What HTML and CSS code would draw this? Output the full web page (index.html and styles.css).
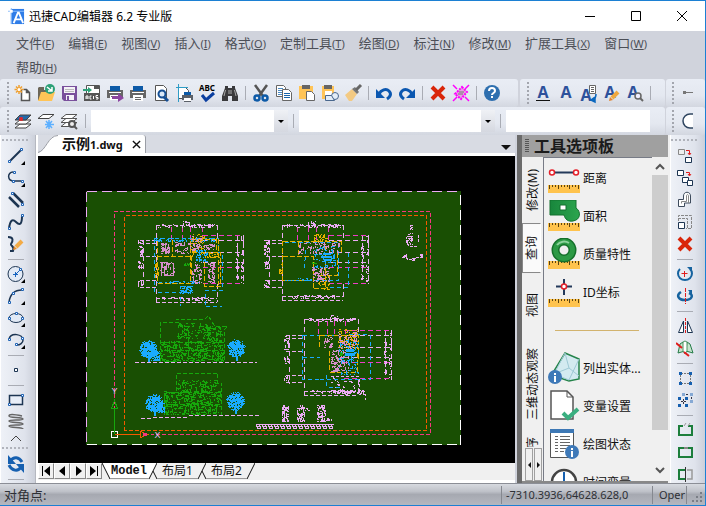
FILE: index.html
```html
<!DOCTYPE html>
<html lang="zh-CN">
<head>
<meta charset="utf-8">
<title>迅捷CAD编辑器 6.2 专业版</title>
<link rel="stylesheet" href="styles.css">
</head>
<body>
<div class="window">
  <header class="titlebar">
    <svg class="logo" viewBox="0 0 18 18"><path fill="#2f7de8" d="M3 1h14v16H3z"/><path fill="#8fc0fb" d="M0 3h17v1H0zM3 0h1v17H3z"/><path stroke="#fff" stroke-width="2" fill="none" d="M6 16 10.500 5h1L16 16M8 12h6"/><path fill="#fff" d="M2 2h3v3H2z"/></svg>
    <h1>迅捷CAD编辑器 6.2 专业版</h1>
    <div class="caption">
      <button aria-label="最小化"><svg viewBox="0 0 12 12"><path d="M1 6.500h10"/></svg></button>
      <button aria-label="最大化"><svg viewBox="0 0 12 12"><path d="M1.500 1.500h9v9h-9z"/></svg></button>
      <button aria-label="关闭"><svg viewBox="0 0 12 12"><path d="m1 1 10 10M11 1 1 11"/></svg></button>
    </div>
  </header>

  <nav class="menu">
    <button>文件<small>(<u>F</u>)</small></button>
    <button>编辑<small>(<u>E</u>)</small></button>
    <button>视图<small>(<u>V</u>)</small></button>
    <button>插入<small>(<u>I</u>)</small></button>
    <button>格式<small>(<u>O</u>)</small></button>
    <button>定制工具<small>(<u>T</u>)</small></button>
    <button>绘图<small>(<u>D</u>)</small></button>
    <button>标注<small>(<u>N</u>)</small></button>
    <button>修改<small>(<u>M</u>)</small></button>
    <button>扩展工具<small>(<u>X</u>)</small></button>
    <button>窗口<small>(<u>W</u>)</small></button>
    <button>帮助<small>(<u>H</u>)</small></button>
  </nav>

  <div class="bars">
    <div class="bar bar-main">
      <i class="grip"></i>
      <button aria-label="新建"><svg viewBox="0 0 18 18"><path d="M7.500 5.500v11h8v-8l-3-3h-3M12.500 5.500v3h3" fill="#fff" stroke="#555" stroke-width="1.500"/><path d="M5 1v9M.5 5.500h9M2 2.500l6 6M8 2.500l-6 6" stroke="#f0a030" stroke-width="1.500"/><circle cx="5" cy="5.500" r="1.500" fill="#fff"/></svg></button>
      <button aria-label="打开"><svg viewBox="0 0 18 18"><path d="M1 16V4l1-1h5v3h7v10z" fill="#6c6659"/><path d="M4 8h14l-3 9H1z" fill="#ffc457"/><circle cx="13" cy="5" r="5" fill="#2da178"/><path d="m10 3 5 4M15 3v4h-4" stroke="#fff" stroke-width="1.500" fill="none"/></svg></button>
      <button aria-label="保存"><svg viewBox="0 0 18 18"><path fill="#7a509c" d="M2 2h15v15H4l-2-2z"/><path fill="#f4f2f7" d="M4 3h11v6H4zM6 11h8v5H6z"/><path stroke="#bbb" d="M5 5.500h9M5 7.500h9"/><path fill="#7a509c" d="M7 12h2v4H7z"/></svg></button>
      <button aria-label="ACIS 导入"><svg viewBox="0 0 18 18"><path fill="#fff" stroke="#555" d="M3.500 1.500h13v14h-13z"/><path fill="#555" d="M1 9h16v8H1zM11 2h5v3h-5z"/><path d="M0 5h5V3l4 3-4 3V7H0z" fill="#2da178"/><path d="M3 15v-3h2v3M3 14h2M8.500 12H7v3h1.500M10.500 12v3M15 11.500h-2v2h2V15h-2" stroke="#fff" fill="none"/></svg></button>
      <button aria-label="直接打印"><svg viewBox="0 0 18 18"><path fill="#666" d="M1 6h16v8H1z"/><path fill="#0d5aa7" d="M4 2h10v5H4z"/><path fill="#fff" d="M3 8h12v1H3zM4 11h9v5H4z"/><path fill="#666" d="M5 12h5v1H5z"/><path d="M6 12h6V9l6 5-6 4v-3H6z" fill="#8b45a0"/></svg></button>
      <button aria-label="打印"><svg viewBox="0 0 18 18"><path fill="#666" d="M1 6h16v8H1z"/><path fill="#0d5aa7" d="M4 2h10v5H4z"/><path fill="#fff" d="M3 8h12v1H3zM4 11h10v6H4z"/><path fill="#666" d="M6 13h6v1H6zM6 15h6v1H6z"/></svg></button>
      <button aria-label="打印预览"><svg viewBox="0 0 18 18"><path d="M3.500 1.500h8l3 3v12h-11z" fill="#fff" stroke="#555"/><circle cx="10" cy="10" r="3.500" fill="#dbe9f8" stroke="#154f94" stroke-width="2"/><path d="m12 13 4 4" stroke="#154f94" stroke-width="3"/></svg></button>
      <button aria-label="页面设置"><svg viewBox="0 0 18 18"><path d="M3.500 3.500h7l3 3v8h-10z" fill="#fff" stroke="#555"/><path d="M3.500 0v18M1 3.500h12" stroke="#2e9cc6"/><path fill="#5b6068" d="M7 11h11v5H7z"/><path fill="#0d5aa7" d="M9 8h7v3H9z"/><path fill="#fff" d="M9 14h7v3H9z"/><path fill="#5b6068" d="M9 17h7v1H9z"/></svg></button>
      <button aria-label="拼写检查"><svg viewBox="0 0 18 18"><text x="9" y="7" class="abc">ABC</text><path d="m4 11 4 5 8-7" fill="none" stroke="#0b3fa0" stroke-width="3"/></svg></button>
      <button aria-label="查找"><svg viewBox="0 0 18 18"><path fill="#3a3a3c" d="M4 2h3v2h4V2h3v2l3 8v5h-6v-5H7v5H1v-5l3-8z"/><path stroke="#aaa" d="M4.500 6 3 12M13.500 6l1.500 6M8 6v4M10 6v4"/></svg></button>
      <hr>
      <button aria-label="剪切"><svg viewBox="0 0 18 18"><path d="m3 1 8 11M15 1 7 12" stroke="#555" stroke-width="2.500"/><circle cx="5" cy="14" r="2.500" fill="none" stroke="#0d5aa7" stroke-width="2.500"/><circle cx="13" cy="14" r="2.500" fill="none" stroke="#0d5aa7" stroke-width="2.500"/></svg></button>
      <button aria-label="复制"><svg viewBox="0 0 18 18"><path d="M1.500 1.500h7l2 2v9h-9z" fill="#fff" stroke="#666"/><path d="M3 4.500h5M3 6.500h4M3 8.500h4M3 10.500h4" stroke="#4a8ac4"/><path d="M7.500 5.500h6l3 3v8h-9z" fill="#fff" stroke="#666"/><path d="M9 9.500h6M9 11.500h6M9 13.500h6" stroke="#1764ab"/></svg></button>
      <button aria-label="粘贴"><svg viewBox="0 0 18 18"><path fill="#ffc457" d="M1 2h14v13H1z"/><path fill="#666" d="M4 1h8v4H4z"/><path d="M8.500 7.500h5l3 3v6h-8z" fill="#fff" stroke="#666"/></svg></button>
      <button aria-label="选择性粘贴"><svg viewBox="0 0 18 18"><path fill="#ffc457" d="M1 2h12v13H1z"/><path fill="#fff" d="M4 7h7v5H4z"/><path fill="#666" d="M3 1h8v4H3z"/><circle cx="14" cy="12" r="3.500" fill="#e3edf8" stroke="#49678d"/><path fill="#e3edf8" stroke="#49678d" d="M4.500 11.500h6l3 5h-9z"/></svg></button>
      <button aria-label="格式刷"><svg viewBox="0 0 18 18"><path d="m1 11 7-6 5 5-5 7H5z" fill="#f3ca83"/><path d="m8 5 3-2 4 5-2 2z" fill="#777"/><path d="m12 6 5-5" stroke="#666" stroke-width="3"/></svg></button>
      <hr>
      <button aria-label="撤销"><svg viewBox="0 0 18 18"><path fill="none" stroke="#0b57b0" stroke-width="3" d="M4 10c2-4 7-6 10-3 3 3 1 6-2 8"/><path fill="#0b57b0" d="M1 5v9h9z"/></svg></button>
      <button aria-label="重做"><svg viewBox="0 0 18 18"><path fill="none" stroke="#0b57b0" stroke-width="3" d="M14 10C12 6 7 4 4 7c-3 3-1 6 2 8"/><path fill="#0b57b0" d="M17 5v9H8z"/></svg></button>
      <hr>
      <button aria-label="删除"><svg viewBox="0 0 18 18"><path stroke="#d9260a" stroke-width="4" d="m3 3 12 12M15 3 3 15"/></svg></button>
      <button aria-label="清理"><svg viewBox="0 0 18 18"><path d="m1 1 4 4M17 1l-4 4M1 17l4-4M17 17l-4-4" stroke="#f0f" stroke-width="1.500"/><path d="m10 3 5 5-6 7-6-5z" fill="#e3a4df" stroke="#f0f" stroke-width="2" stroke-dasharray="2 1"/><path d="M7 8h5M6 10h5" stroke="#777"/></svg></button>
      <hr>
      <button aria-label="帮助"><svg viewBox="0 0 18 18"><circle cx="9" cy="9" r="8" fill="#2e6faf"/><path d="M6 7c0-4 6-4 6 0 0 2-3 2-3 4" stroke="#fff" stroke-width="2" fill="none"/><path fill="#fff" d="M8 12h2v2H8z"/></svg></button>
    </div>
    <div class="bar bar-text">
      <i class="grip"></i>
      <button aria-label="多行文字"><svg viewBox="0 0 18 18"><text x="9" y="14" class="letter">A</text><path stroke="#111" d="M2 16.500h14"/></svg></button>
      <button aria-label="单行文字"><svg viewBox="0 0 18 18"><text x="9" y="14" class="letter">A</text></svg></button>
      <button aria-label="文字样式"><svg viewBox="0 0 18 18"><text x="6" y="17" class="letter">A</text><path d="M9.500 1.500h6v8h-6z" fill="#fff" stroke="#666"/><path stroke="#666" d="M11 3.500h3M11 5.500h3M11 7.500h3"/><path d="M16 10c0 4-1 5-3 6M11 16l4-3v5z" stroke="#0b68bf" fill="#0b68bf" stroke-width="1.500"/></svg></button>
      <button aria-label="编辑文字"><svg viewBox="0 0 18 18"><text x="7" y="14" class="letter">A</text><path stroke="#f0a93f" stroke-width="4" d="m9 14 6-6"/><path fill="#e2832c" d="m6 17 1-4 3 3z"/></svg></button>
      <button aria-label="查找文字"><svg viewBox="0 0 18 18"><text x="7" y="14" class="letter">A</text><circle cx="12" cy="12" r="3" fill="#eef" stroke="#666" stroke-width="1.500"/><path d="m14 14 3 3" stroke="#666" stroke-width="2"/></svg></button>
      <hr>
    </div>
    <div class="bar bar-tail">
      <i class="grip"></i>
      <button aria-label="线型"><svg viewBox="0 0 18 18"><path fill="#777" d="M4 7h3v3H4z"/><path stroke="#777" d="M7 8.500h7"/></svg></button>
    </div>
  </div>

  <div class="bars">
    <div class="bar bar-layers">
      <i class="grip"></i>
      <button aria-label="图层特性"><svg viewBox="0 0 18 18"><path d="M6 12h11l-5 4H1z" fill="#fff" stroke="#444"/><path d="M6 8h11l-5 4H1z" fill="#fff" stroke="#444"/><path d="M6 3h11l-5 5H1z" fill="#2469a8" stroke="#444"/><path fill="#2469a8" stroke="#e22" stroke-width="1.500" d="M6 6h2v2H6z"/></svg></button>
      <button aria-label="冻结图层"><svg viewBox="0 0 18 18"><path d="M6 2.500h11l-5 4H1z" fill="#fff" stroke="#444"/><path d="M12 8v9M8 12.500h9M9 9l6 7M15 9l-6 7" stroke="#5db0ff" stroke-width="1.500"/></svg></button>
      <button aria-label="查看图层"><svg viewBox="0 0 18 18"><path d="M6 10.500h11l-5 4H1z" fill="#fff" stroke="#555"/><path d="M6 6.500h11l-5 4H1z" fill="#fff" stroke="#555"/><path d="M6 2.500h11l-5 4H1z" fill="#fff" stroke="#555"/><circle cx="12" cy="12" r="3" fill="#eee" stroke="#555" stroke-width="2"/><path d="m14 14 3 3" stroke="#555" stroke-width="2"/></svg></button>
      <hr class="wide">
      <label class="combo"><select aria-label="图层"><option></option></select><b></b></label>
      <hr class="wide">
      <label class="combo"><select aria-label="颜色"><option></option></select><b></b></label>
      <hr class="wide">
      <label class="combo combo-plain"><select aria-label="线型"><option></option></select></label>
    </div>
    <div class="bar bar-tail">
      <i class="grip"></i>
      <button aria-label="圆"><svg viewBox="0 0 18 18"><path d="M14 2H11a7 7 0 0 0 0 14h3z" fill="#fff"/><path d="M14 2H11a7 7 0 0 0 0 14h3" fill="none" stroke="#2f4560" stroke-width="1.500"/></svg></button>
    </div>
  </div>

  <main class="work">
    <aside class="rail">
      <i class="grip-h"></i>
      <button aria-label="直线"><svg viewBox="0 0 18 18"><path d="M3 14 14 3" stroke="#1d3552" stroke-width="2"/><path class="node" d="M1.500 13.500h2v2h-2zM13.500 1.500h2v2h-2z"/><path d="M18 14v4h-4z"/></svg></button>
      <button aria-label="多段线"><svg viewBox="0 0 18 18"><path d="M6 3C0 3 0 12 7 12h7" stroke="#1d3552" fill="none" stroke-width="1.500"/><path class="node" d="M6.500 2.500h2v2h-2zM5.500 11.500h2v2h-2zM14.500 11.500h2v2h-2z"/><path d="M18 14v4h-4z"/></svg></button>
      <button aria-label="双线"><svg viewBox="0 0 18 18"><path d="m2 6 10 10M6 2l10 10" stroke="#1d3552" stroke-width="2.500"/><path class="node" d="M4.500 1.500h2v2h-2zM14.500 12.500h2v2h-2z"/></svg></button>
      <button aria-label="样条曲线"><svg viewBox="0 0 18 18"><path d="M2 16C3 6 6 6 9 9c4 4 6 2 6-6" stroke="#1d3552" fill="none" stroke-width="2"/><path class="node" d="M1.500 14.500h2v2h-2zM14.500 1.500h2v2h-2z"/></svg></button>
      <button aria-label="徒手画"><svg viewBox="0 0 18 18"><path d="M1 2c6 0 5 4 3 7-1 2 4 2 2 7H3" stroke="#1d3552" fill="none" stroke-width="2"/><path stroke="#f3ab45" stroke-width="4" d="m9 12 6-6"/><path fill="#e58b2a" d="m6 15 1-4 3 3z"/></svg></button>
      <hr>
      <button aria-label="圆"><svg viewBox="0 0 18 18"><circle cx="8.500" cy="9" r="7.500" fill="#e2eaf6" stroke="#1d3552"/><path stroke="#1764c0" d="M6 9.500h5M8.500 7v5M9 9l4-4"/><path class="node" d="M12.500 3.500h2v2h-2z"/><path d="M18 14v4h-4z"/></svg></button>
      <button aria-label="圆弧"><svg viewBox="0 0 18 18"><path d="M2 15C3 8 7 3 15 3" stroke="#1d3552" fill="none" stroke-width="1.500"/><path class="node" d="M1.500 14.500h2v2h-2zM5.500 5.500h2v2h-2zM14.500 1.500h2v2h-2z"/><path d="M18 14v4h-4z"/></svg></button>
      <button aria-label="椭圆"><svg viewBox="0 0 18 18"><ellipse cx="9" cy="9" rx="7" ry="4.500" fill="#e2eaf6" stroke="#1d3552"/><path class="node" d="M1.500 8.500h2v2h-2zM8.500 3.500h2v2h-2zM14.500 8.500h2v2h-2z"/><path d="M18 14v4h-4z"/></svg></button>
      <button aria-label="椭圆弧"><svg viewBox="0 0 18 18"><path d="M2 8c2-7 14-5 14 1 0 3-3 5-6 5" fill="none" stroke="#1d3552" stroke-width="1.500"/><path class="node" d="M1.500 7.500h2v2h-2zM8.500 12.500h2v2h-2zM14.500 6.500h2v2h-2z"/><path d="M18 14v4h-4z"/></svg></button>
      <hr>
      <button aria-label="点"><svg viewBox="0 0 18 18"><path d="M7.500 7.500h3v3h-3z" fill="#fff" stroke="#1d3552"/></svg></button>
      <hr>
      <button aria-label="矩形"><svg viewBox="0 0 18 18"><path d="M2.500 4.500h13v9h-13z" fill="#e8eef8" stroke="#1d3552" stroke-width="1.500"/><path class="node" d="M1.500 12.500h2v2h-2zM14.500 3.500h2v2h-2z"/></svg></button>
      <button aria-label="弹簧"><svg viewBox="0 0 18 18"><path d="M15 3C6 1 2 1 2 3s14 1 14 3-14 0-14 2 14 1 14 3-14 0-14 2 14 1 14 3" fill="none" stroke="#666" stroke-width="1.500"/></svg></button>
      <button class="more" aria-label="更多"><svg viewBox="0 0 18 18"><path d="m4 12 5-5 5 5" fill="none" stroke="#444"/></svg></button>
      <i class="grip-h"></i>
      <button aria-label="刷新"><svg viewBox="0 0 18 18"><path fill="none" stroke="#1660b0" stroke-width="3" d="M15 7C12 2 7 1 3 6M2 10c3 6 9 7 12 2"/><path fill="#1660b0" d="M1 0v9h8zM17 18V9H9z"/></svg></button>
      <hr>
    </aside>

    <section class="doc">
      <div class="doctabs">
        <div class="doctab"><svg class="slope" viewBox="0 0 20 18"><path d="M0 18C8 16 10 0 20 0v18z" fill="#fff"/><path d="M0 17.500C8 16 10 .5 20 .5" fill="none" stroke="#9a9da5"/></svg><span>示例<em>1.dwg</em></span><button aria-label="关闭文档"><svg viewBox="0 0 10 10"><path d="m1 1 8 8M9 1 1 9" stroke="#111" stroke-width="1.500"/></svg></button></div>
        <button class="doclist" aria-label="文档列表"></button>
      </div>
      <div class="canvas"><svg id="drawing" viewBox="38 156 477 307" preserveAspectRatio="xMinYMin meet"></svg></div>
      <div class="layouts">
        <button class="step" aria-label="第一个"><svg viewBox="0 0 12 12"><path d="M2 1h1v10H2zM10 1v10L4 6z"/></svg></button>
        <button class="step" aria-label="上一个"><svg viewBox="0 0 12 12"><path d="M9 1v10L3 6z"/></svg></button>
        <button class="step" aria-label="下一个"><svg viewBox="0 0 12 12"><path d="M4 1v10l6-5z"/></svg></button>
        <button class="step" aria-label="最后一个"><svg viewBox="0 0 12 12"><path d="M2 1v10l6-5zM9 1h1v10H9z"/></svg></button>
        <svg class="cut first" viewBox="0 0 8 16"><path class="paper" d="M0 0h8v16z"/><path d="m0 0 8 16"/></svg>
        <button class="layout current">Model</button>
        <svg class="cut" viewBox="0 0 8 16"><path class="paper" d="M0 0h8L0 16z"/><path d="M8 0 0 16M4 8l4 8"/></svg>
        <button class="layout">布局1</button>
        <svg class="cut" viewBox="0 0 8 16"><path d="M8 0 0 16M4 8l4 8"/></svg>
        <button class="layout">布局2</button>
        <svg class="cut" viewBox="0 0 8 16"><path d="M8 0 0 16"/></svg>
      </div>
    </section>

    <section class="palette">
      <h2><i></i>工具选项板</h2>
      <div class="pbody">
        <div class="ptabs">
          <button>修改(M)</button>
          <button class="on">查询</button>
          <button class="mid">视图</button>
          <button class="far">三维动态观察</button>
          <button class="last">程序</button>
          <div class="pscroll"><button aria-label="向前"></button><button class="next" aria-label="向后"></button></div>
        </div>
        <div class="plist">
          <button class="tool"><svg viewBox="0 0 32 32"><use href="#ruler"/><path d="M4 10.500h24" stroke="#23395a" stroke-width="2"/><circle cx="4" cy="10.500" r="2.500" class="red"/><circle cx="28" cy="10.500" r="2.500" class="red"/></svg>距离</button>
          <button class="tool"><svg viewBox="0 0 32 32"><use href="#ruler"/><path d="M2 0h26v8c5 3 5 12-3 13-5 1-8-2-9-6H2z" fill="url(#leaf)" stroke="#13702f"/><path fill="#fff" stroke="#13702f" d="M12 5h6v5h-6z"/></svg>面积</button>
          <button class="tool"><svg viewBox="0 0 32 32"><use href="#ruler"/><circle cx="16" cy="12" r="8.500" fill="#efefef" stroke="#15702b" stroke-width="8"/><circle cx="16" cy="12" r="8.500" fill="none" stroke="#2c9a45" stroke-width="5"/><path d="M9 7a9 9 0 0 1 12-2" stroke="#8ed39d" stroke-width="2" fill="none"/></svg>质量特性</button>
          <button class="tool"><svg viewBox="0 0 32 32"><use href="#ruler"/><path d="M16 3v16M8 10.500h16" stroke="#23395a" stroke-width="2"/><circle cx="16" cy="10.500" r="2.500" class="red"/></svg>ID坐标</button>
          <hr>
          <button class="tool"><svg viewBox="0 0 32 32"><path d="m17 1 14 6v20l-10 2-15-5V19z" fill="#d3eaf0" stroke="#25834a" stroke-width="1.500"/><path d="M17 1 6 22l15 6 10-21M6 22l15-6 10 8M21 16 17 1" fill="none" stroke="#9ec9d5"/><use href="#info" x="0" y="18"/></svg>列出实体...</button>
          <button class="tool"><svg viewBox="0 0 32 32"><path d="M3 1h16l6 6v22H3z" fill="#fff" stroke="#555" stroke-width="1.500"/><path d="M19 1v6h6" fill="none" stroke="#555"/><path d="m15 23 5 5 10-9" fill="none" stroke="#3aaf80" stroke-width="4"/></svg>变量设置</button>
          <button class="tool"><svg viewBox="0 0 32 32"><path d="M2.500 1.500h23v28h-23z" fill="#fff" stroke="#555"/><path fill="#3d78b5" d="M2 1h24v4H2z"/><path d="M7 8.500h3M12 8.500h10M7 11.500h3M12 11.500h10M7 14.500h3M12 14.500h10M7 17.500h3M12 17.500h10M7 20.500h3M12 20.500h6M7 23.500h3M12 23.500h4" stroke="#666"/><use href="#info" x="17" y="17"/></svg>绘图状态</button>
          <button class="tool"><svg viewBox="0 0 32 32"><circle cx="16" cy="16" r="12" fill="#fff" stroke="#444" stroke-width="2.500"/><path d="M16 6v10" stroke="#1660b0" stroke-width="2"/></svg>时间变量</button>
        </div>
        <div class="scroll">
          <button aria-label="向上滚动"><svg viewBox="0 0 10 10"><path d="m1 7 4-4 4 4"/></svg></button>
          <i class="thumb"></i>
          <button aria-label="向下滚动"><svg viewBox="0 0 10 10"><path d="m1 3 4 4 4-4"/></svg></button>
        </div>
      </div>
    </section>

    <aside class="rail rail-right">
      <i class="grip-h"></i>
      <button aria-label="复制对象"><svg viewBox="0 0 18 18"><path d="M2.500 2.500h6v5h-6z" fill="#eee" stroke="#888"/><path d="M10 3.500h3.500V7M12 6l1.500 2L15 6" class="redline"/><path d="M9.500 10.500h6v5h-6z" class="box"/></svg></button>
      <button aria-label="多次复制"><svg viewBox="0 0 18 18"><path d="M1.500 1.500h6v5h-6z" class="box"/><path d="M10 3.500h3.500V6M12 5l1.500 2L15 5" class="redline"/><path d="M6.500 8.500h6v5h-6z" class="box"/><path d="M11.500 11.500h5v5h-5z" class="box"/></svg></button>
      <button aria-label="偏移"><svg viewBox="0 0 18 18"><path d="M2.500 15.500v-7h5V5c0-5 7-5 7 0v7h-6v3.500z" fill="#fff" stroke="#3e4b5c"/><path d="M5.500 12.500v-2h5V5c0-2 2-2 2 0v7" fill="none" stroke="#888"/></svg></button>
      <button aria-label="缩放"><svg viewBox="0 0 18 18"><path d="M2.500 8V2.500h13v13H10M2 5.500h9.500V16" fill="none" stroke="#888" stroke-dasharray="3 1"/><path d="M2.500 9.500h6v6h-6z" class="box"/></svg></button>
      <button aria-label="删除对象"><svg viewBox="0 0 18 18"><path stroke="#d9260a" stroke-width="4" d="m3 3 12 12M15 3 3 15"/></svg></button>
      <hr>
      <button aria-label="旋转"><svg viewBox="0 0 18 18"><path d="M4 4a7 6.500 0 1 0 10 0" fill="none" stroke="#16639f" stroke-width="2"/><path fill="#16639f" d="M11 2h5v5z"/><path class="redline" d="M8.500 6v6M5.500 8.500h6"/></svg></button>
      <button aria-label="三维旋转"><svg viewBox="0 0 18 18"><path d="M5 5C0 8 2 13 9 13s9-5 4-7" fill="none" stroke="#16639f" stroke-width="2.500"/><path fill="#16639f" d="M12 3h4v5z"/><path class="redline" d="M9.500 1v16" stroke-dasharray="4 1"/></svg></button>
      <hr>
      <button aria-label="镜像"><svg viewBox="0 0 18 18"><path d="M7.500 4v11.500h-5zM11.500 4v11.500h5z" fill="#fff" stroke="#1d3552"/><path class="redline" d="M9.500 1v16" stroke-dasharray="3 1"/></svg></button>
      <button aria-label="三维镜像"><svg viewBox="0 0 18 18"><path d="m2 14 2-9 3-2 2 9zM10 12l1-9 3 2 3 9z" fill="#c8e4ce" stroke="#257c48"/><path d="m7 3 2-1 2 1v9l-2 3-2-3z" fill="#fff" stroke="#4a9461"/><path class="redline" d="m0 4 6 5M8 13l5 4" stroke-width="2"/></svg></button>
      <hr>
      <button aria-label="编组"><svg viewBox="0 0 18 18"><path d="M5 4.500h9M5 14.500h9M4.500 6v7M14.500 6v7" stroke="#777" stroke-dasharray="2 1"/><path fill="#1660b0" d="M3 3h3v3H3zM13 3h3v3h-3zM3 13h3v3H3zM13 13h3v3h-3z"/></svg></button>
      <button aria-label="阵列"><svg viewBox="0 0 18 18"><path fill="#86a9d4" d="M6 2h3v3H6zM14 2h3v3h-3zM14 9h3v3h-3z"/><path fill="#1660b0" d="M2 6h3v3H2zM9 6h3v3H9zM2 13h3v3H2zM9 13h3v3H9z"/><path d="M7.500 8v5M5 10.500h6M10 3.500h3M15.500 6v2" stroke="#334" stroke-dasharray="2 1"/></svg></button>
      <hr>
      <button aria-label="打断"><svg viewBox="0 0 18 18"><path d="M7 5H3v9h13V5h-4" class="green"/><path d="m8 5 2-3M12 5l2-3" stroke="#999"/></svg></button>
      <button aria-label="合并"><svg viewBox="0 0 18 18"><path d="M3 5h13v9H3z" class="green"/><path d="M8 4h4v2H8z" fill="#888"/></svg></button>
      <button aria-label="修剪"><svg viewBox="0 0 18 18"><path d="M9 5H3v9h6" class="green"/><path d="M11 5h5v9h-5" fill="none" stroke="#999" stroke-width="1.500"/><path d="M9.500 2v15" stroke="#333"/></svg></button>
    </aside>
  </main>

  <footer class="status">
    <span class="prompt">对角点:</span>
    <output class="coords">-7310.3936,64628.628,0</output>
    <span class="mode">Oper</span>
    <svg class="corner" viewBox="0 0 12 12"><path d="M9 1h2v2H9zM5 5h2v2H5zM9 5h2v2H9zM1 9h2v2H1zM5 9h2v2H5zM9 9h2v2H9z" fill="#7a7e86"/></svg>
  </footer>
</div>

<svg class="defs" aria-hidden="true">
  <defs>
    <linearGradient id="leaf"><stop offset="0" stop-color="#18863c"/><stop offset="1" stop-color="#2ca54e"/></linearGradient>
    <g id="ruler"><path fill="#ffc34d" d="M0 23h32v8H0z"/><path stroke="#5c4410" d="M1.500 23v4M4.500 23v2M7.500 23v2M10.500 23v4M13.500 23v2M16.500 23v2M19.500 23v2M21.500 23v4M24.500 23v2M27.500 23v2M30.500 23v4"/></g>
    <g id="info"><circle cx="7" cy="7" r="7" fill="#3e79b8"/><path d="M6 3h2v2H6zM6 6h2v6H6z" fill="#fff"/></g>
  </defs>
</svg>
<script src="drawing.js"></script>
</body>
</html>
```
FILE: styles.css
```css
* { box-sizing: border-box; }
body {
  margin: 0;
  font-family: "Noto Sans", "Noto Sans CJK SC", sans-serif;
  font-size: 12px;
  color: #111;
}
button, select {
  margin: 0;
  padding: 0;
  border: 0;
  border-radius: 0;
  background: none;
  font: inherit;
  color: inherit;
}
svg { display: block; flex: none; }
hr { margin: 0; border: 0; flex: none; }
.defs { position: absolute; width: 0; height: 0; }

.window {
  display: flex;
  flex-direction: column;
  height: 100vh;
  overflow: hidden;
  border: 1px solid #1c80d3;
  border-left: 0;
  background: #d0d3dc;
}

.titlebar { display: flex; align-items: center; flex: none; height: 30px; padding-left: 8px; background: #fff; }
.logo { width: 17px; height: 17px; }
.titlebar h1 { flex: 1; margin: 0 0 0 4px; font-size: 12px; font-weight: 400; color: #000; }
.caption { display: flex; }
.caption button { display: flex; align-items: center; justify-content: center; width: 46px; height: 29px; }
.caption svg { width: 12px; height: 12px; fill: none; stroke: #000; }

.menu { display: flex; flex-wrap: wrap; flex: none; column-gap: 14px; padding: 0 16px; color: #4c4f57; }
.menu button { height: 24px; font-size: 13px; line-height: 20px; white-space: nowrap; }
.menu small { font-size: 11px; }

.bars { display: flex; flex: none; height: 28px; }
.bar {
  display: flex;
  align-items: center;
  flex: none;
  padding-left: 7px;
  border-radius: 3px;
  background: linear-gradient(#e9edf5, #e4e8f0 60%, #d3d7e0);
}
.bar button { display: flex; align-items: center; justify-content: center; flex: none; width: 23px; height: 26px; }
.bar svg { width: 18px; height: 18px; overflow: visible; }
.bar hr { width: 8px; height: 14px; background: linear-gradient(#a9acb4, #a9acb4) center / 1px 100% no-repeat; }
.bar hr.wide { width: 11px; }
.bar-main { flex: 1; margin-right: 2px; }
.bar-text { width: 145px; margin-right: 1px; }
.bar-layers { flex: 1; margin-right: 1px; padding-right: 15px; }
.bar-tail { width: 39px; padding-left: 6px; }
.grip {
  flex: none;
  width: 2px;
  height: 22px;
  margin-right: 2px;
  background: repeating-linear-gradient(#a3a6ae 0 2px, transparent 2px 4px);
}
.abc { font: bold 8px "Noto Sans", sans-serif; text-anchor: middle; }
.letter { font: bold 16px "Open Sans", sans-serif; text-anchor: middle; fill: #2d519b; }
.combo { display: flex; flex: 197; height: 22px; background: #fff; }
.combo-plain { flex: 144; }
.combo select { flex: 1; min-width: 0; appearance: none; }
.combo b { display: flex; align-items: center; justify-content: center; width: 14px; background: linear-gradient(#eff1f5, #d5d8e0); }
.combo b::before { content: ""; border: 3px solid transparent; border-top-color: #000; border-bottom: 0; }

.work { display: flex; flex: 1; min-height: 0; }

.rail {
  display: flex;
  flex-direction: column;
  flex: none;
  width: 35px;
  padding: 4px 6px 0 1px;
  overflow: hidden;
  border-left: 1px solid #fff;
  background: linear-gradient(90deg, #eef1f7, #dfe3ec 70%, #ccd0da);
}
.rail button { display: flex; align-items: center; justify-content: center; flex: none; height: 22px; }
.rail svg { width: 18px; height: 18px; }
.rail .more { height: 10px; }
.rail hr { height: 8px; background: linear-gradient(#a9acb4, #a9acb4) center / 16px 1px no-repeat; }
.grip-h {
  flex: none;
  height: 2px;
  margin: 0 0 4px;
  background: repeating-linear-gradient(90deg, #b0b3bb 0 2px, transparent 2px 4px);
}
.more + .grip-h { margin-top: 4px; }
.rail-right { padding-left: 0; }
.node { fill: #fff; stroke: #1f63b5; }
.box { fill: #fff; stroke: #1d3552; }
.redline { fill: none; stroke: #e01c1c; }
.green { fill: none; stroke: #1c7e3c; stroke-width: 2; }

.doc { display: flex; flex-direction: column; flex: 1; min-width: 0; padding-left: 2px; background: #fff; border-left: 1px solid #b5b8c0; }
.doctabs {
  display: flex;
  align-items: flex-end;
  justify-content: space-between;
  flex: none;
  height: 21px;
  padding-right: 4px;
  border-bottom: 3px solid #fff;
  background: #d8dbe3;
}
.doctab { display: flex; align-items: center; height: 18px; padding-right: 4px; border-right: 1px solid #9a9da5; border-radius: 0 3px 0 0; background: linear-gradient(#fff, #fff) right / 88px 100% no-repeat; font-size: 14px; font-weight: 700; }
.doctab em { font-size: 11px; font-style: normal; }
.slope { width: 20px; height: 18px; }
.doctab span { padding: 0 9px 0 4px; line-height: 18px; white-space: nowrap; }
.doctab button svg { width: 9px; height: 9px; }
.doclist { width: 10px; height: 12px; }
.doclist::before { content: ""; display: block; border: 5px solid transparent; border-top-color: #111; border-bottom: 0; }
.canvas { display: flex; flex: 1; min-height: 0; background: #000; }
.canvas svg { flex: 1; min-width: 0; height: 100%; shape-rendering: crispEdges; }
.axis { font: 9px "Liberation Sans", sans-serif; fill: #ecbafa; text-anchor: middle; }

.layouts { display: flex; align-items: flex-start; flex: none; height: 20px; border-bottom: 3px solid #fff; background: #f0f0f0; font-size: 12px; }
.step { display: flex; align-items: center; justify-content: center; width: 16px; height: 16px; border: 1px solid #fff; border-right-color: #888; border-bottom-color: #888; }
.step svg { width: 12px; height: 12px; }
.cut { width: 8px; height: 16px; fill: none; stroke: #111; }
.cut .paper { fill: #fff; stroke: none; }
.layout { height: 16px; padding: 0 5px; line-height: 16px; border-bottom: 1px solid #999; }
.layout.current { padding: 0 2px 0 1px; background: #fff; font: bold 12px "Liberation Mono", monospace; }

.palette { display: flex; flex-direction: column; flex: none; width: 153px; border-left: 5px solid #6b6b6b; margin-left: 2px; background: #f0f0f0; }
.palette h2 { display: flex; align-items: center; flex: none; height: 22px; margin: 0 2px 0 0; padding-left: 3px; background: #a0a0a0; font-size: 16px; line-height: 20px; font-weight: 700; color: #1b1b1b; }
.palette h2 i { width: 4px; height: 14px; margin-right: 5px; background: repeating-linear-gradient(#555 0 1px, transparent 1px 2px); }
.pbody { display: flex; flex: 1; min-height: 0; margin-right: 2px; border-bottom: 2px solid #888; }
.ptabs { position: relative; display: flex; flex-direction: column; width: 21px; overflow: hidden; }
.ptabs > button { flex: none; width: 21px; padding: 12px 0; line-height: 18px; writing-mode: vertical-rl; text-orientation: sideways; transform: rotate(180deg); white-space: nowrap; }
.ptabs > .mid { padding: 14px 0 20px; }
.ptabs > .far { padding: 17px 0; }
.ptabs > .last { padding: 0; }
.ptabs > .on { width: 19px; border: 1px solid #888; border-left-color: #fff; background: #fafafa; }
.pscroll { position: absolute; left: 3px; bottom: 0; display: flex; gap: 1px; padding-top: 1px; background: #f0f0f0; }
.pscroll button { display: flex; align-items: center; justify-content: center; width: 8px; height: 33px; border: 1px solid #a0a0a0; }
.pscroll button::before { content: ""; border: 3px solid transparent; border-right-color: #111; border-left: 0; }
.pscroll .next::before { border: 3px solid transparent; border-left-color: #111; border-right: 0; }
.plist { flex: 1; min-width: 0; overflow: hidden; padding: 1px 0 0 4px; border-left: 1px solid #777b86; border-top: 1px solid #777b86; }
.tool { display: flex; align-items: center; gap: 3px; width: 100%; height: 38px; white-space: nowrap; }
.tool svg { width: 32px; height: 32px; }
.plist hr { height: 38px; margin: 0 13px 0 7px; background: linear-gradient(#d2b36e, #d2b36e) center / 100% 1px no-repeat; }
.red { fill: #fff; stroke: #e5202a; stroke-width: 1.5px; }
.scroll { display: flex; flex-direction: column; width: 16px; margin-top: 1px; background: #f0f0f0; }
.scroll button { display: flex; align-items: center; justify-content: center; flex: none; height: 17px; }
.scroll button:last-child { margin-top: auto; height: 22px; }
.scroll svg { width: 10px; height: 10px; fill: none; stroke: #555; stroke-width: 2; }
.thumb { flex: 0 1 79%; background: #cdcdcd; }

.status {
  display: flex;
  align-items: center;
  flex: none;
  height: 22px;
  padding-left: 4px;
  border-top: 1px solid #8b8e96;
  background: linear-gradient(#d7dae0, #bfc2c9 35%, #a6a9b1 50%, #b4b7bf);
  color: #2e3035;
  font-size: 11px;
}
.prompt { flex: 1; font-size: 13px; }
.coords { width: 152px; height: 18px; padding-left: 4px; border-left: 1px solid #85888f; border-right: 1px solid #85888f; line-height: 18px; }
.mode { width: 34px; height: 18px; padding-left: 6px; line-height: 18px; border-right: 1px solid #85888f; }
.corner { width: 12px; height: 12px; margin: 5px 2px 0 4px; }
```
FILE: drawing.js
```js
const svg = document.getElementById("drawing");
const LILAC = "#ecacf5", PINK = "#d78fcb", BLUE = "#1aabff", GOLD = "#e8b000";
const GREEN = "#16a80c", MAGENTA = "#f03cc8", ROSE = "#f5387f", ORANGE = "#f45a00";

let seed = 7;
function rnd() {
  seed = (seed * 16807) % 2147483647;
  return seed / 2147483647;
}
function add(name, attrs) {
  const el = document.createElementNS("http://www.w3.org/2000/svg", name);
  for (const k in attrs) el.setAttribute(k, attrs[k]);
  svg.appendChild(el);
  return el;
}
function line(d, stroke, dash) {
  add("path", { d, stroke, fill: "none", "stroke-dasharray": dash || "none" });
}
// Short horizontal and vertical strokes scattered in a box.
function strokes(x, y, w, h, color, density) {
  let d = "";
  const n = Math.round(w * h * density);
  for (let i = 0; i < n; i++) {
    const px = x + Math.floor(rnd() * w), py = y + Math.floor(rnd() * h);
    const len = 1 + Math.floor(rnd() * 3);
    d += rnd() < 0.5
      ? `M${px} ${py}h${Math.min(len, x + w - px)}v1h-${Math.min(len, x + w - px)}z`
      : `M${px} ${py}h1v${Math.min(len, y + h - py)}h-1z`;
  }
  add("path", { d, fill: color });
}
function tree(cx, cy) {
  let d = "";
  for (let y = -9; y <= 9; y++)
    for (let x = -9; x <= 9; x++)
      if ((x * x) / 80 + (y * y) / 80 < 0.75 + rnd() * 0.4 && rnd() < 0.82)
        d += `M${cx + x} ${cy + y}h1v1h-1z`;
  add("path", { d: d + `M${cx} ${cy + 8}h2v5h-2z`, fill: BLUE });
}

// Sheet and frames
add("rect", { x: 86, y: 191, width: 375, height: 254, fill: "#194f03" });
line("M87 191.5h373M86.5 192v252", LILAC, "10 5");
line("M460.500 195v250M87 444.500h373", "#fff", "10 5");
line("M114.500 434V211.500h316v223h-280", ROSE, "4 2");
line("M124.500 430.500v-215h302v215z", ORANGE, "4 2");

// Dimension chains around a plan: l, t, r, b are the edges of the plan body
function dims(l, t, r, b, left, right, top, bottom) {
  line(`M${l}.5 ${top}V${bottom}M${left + 5}.5 ${t}V${b}M${right}.5 ${t - 5}V${b - 4}M${right - 6}.5 ${t - 5}V${b - 4}`, LILAC, "5 3");
  line(`M${l} ${top}.5H${r}M${l} ${bottom}.5H${r}M${l} ${bottom - 4}.5H${r}`, LILAC, "4 2");
  line(`M${r}.5 ${top}v16M${r}.5 ${b - 4}V${bottom}`, LILAC, "5 3");
  [0.25, 0.43, 0.56, 0.76].forEach(k => line(`M${Math.round(l + (r - l) * k)}.5 ${top + 2}v14`, MAGENTA, "5 3"));
  [0, 3, 16, 40, 47].forEach(k => line(`M${left + 2} ${t + k}.5H${l}`, LILAC, "4 2"));
  [-5, 0, 12, 22, 27, 43].forEach(k => line(`M${r - 14} ${t + k}.5H${right}`, k % 2 ? MAGENTA : LILAC, "5 3"));
  strokes(l + 2, top - 1, r - l - 4, 4, LILAC, 0.24);
  strokes(l + 26, top - 4, 8, 4, LILAC, 0.35);
  strokes(l + 6, bottom - 5, r - l - 12, 4, LILAC, 0.18);
  [0, 8, 21, 40].forEach(k => strokes(left, t + k, 5, 8, LILAC, 0.3));
  [5, 14, 24, 34].forEach(k => strokes(right - 7, t + k, 3, 6, LILAC, 0.35));
  [-4, 8, 20, 27, 36].forEach(k => strokes(right - 2, t + k, 3, 7, LILAC, 0.35));
}

// Plan 1
dims(156, 240, 217, 288, 138, 243, 225, 302);
line("M154.500 239v53h26v14M154 238.500h64v14h4v38h-17v16h17", BLUE, "4 3");
strokes(155, 238, 62, 4, BLUE, 0.25);
strokes(155, 281, 45, 3, BLUE, 0.3);
line("M157.500 241v42h33v-44h28v46M157 256.500h36M204.500 262v24h16v-34h-30", GOLD, "5 2");
line("M172.500 240v16M191.500 256v20M216.500 238v14", GOLD, "5 2");
strokes(190, 234, 15, 22, GOLD, 0.16);
strokes(155, 262, 4, 16, GOLD, 0.4);
strokes(203, 252, 18, 6, GOLD, 0.2);
strokes(161, 243, 9, 11, PINK, 0.55);
line("M160 262.500h8M161.500 262v14M164 275.500h10M173.500 265v10", PINK);
strokes(160, 262, 15, 14, PINK, 0.2);
strokes(175, 242, 16, 12, PINK, 0.18);
strokes(192, 236, 10, 15, PINK, 0.25);
strokes(192, 262, 10, 22, PINK, 0.24);
strokes(208, 263, 7, 20, PINK, 0.35);
strokes(203, 244, 12, 6, PINK, 0.3);
strokes(196, 250, 12, 12, BLUE, 0.32);
strokes(180, 286, 13, 8, BLUE, 0.45);
strokes(184, 263, 6, 3, GREEN, 0.5);

// Plan 2
dims(282, 240, 343, 288, 264, 368, 225, 300);
line("M282.500 242v38h56v-38zM306 250l-2 20M330 287.500h18v-38", BLUE, "4 3");
line("M282.500 241v42M283 241.500h58v12M283 256.500h30v32h12v-44M337.500 253v22h-20", GOLD, "5 2");
line("M283 280.500h26M298.500 242v14", GOLD, "5 3");
strokes(314, 234, 14, 8, GOLD, 0.32);
strokes(279, 264, 4, 10, GOLD, 0.4);
strokes(298, 242, 42, 12, PINK, 0.17);
strokes(312, 267, 18, 15, PINK, 0.3);
add("path", { d: "M323 253h8v2h-8zM322 256h10v2h-10zM324 259h7v2h-7z", fill: BLUE });
strokes(314, 246, 22, 22, BLUE, 0.13);
strokes(318, 272, 12, 18, GOLD, 0.12);
strokes(284, 278, 28, 3, BLUE, 0.25);
strokes(311, 262, 6, 2, GREEN, 0.6);

// Plan 3
dims(304, 335, 358, 384, 284, 391, 319, 395);
line("M302.500 335v44h16M303 335.500h35M303 357.500h17M320 379.500h50v-45h-20M326.500 375v12h18", BLUE, "4 3");
line("M319.500 335v14M320 335.500h38v24M329.500 351v21h28v-20M330 372.500h20", GOLD, "5 2");
strokes(324, 336, 9, 12, PINK, 0.3);
strokes(338, 331, 20, 18, PINK, 0.24);
strokes(331, 350, 18, 22, PINK, 0.3);
strokes(338, 329, 20, 20, GOLD, 0.14);
strokes(339, 340, 20, 35, BLUE, 0.1);
add("path", { d: "M346 349h8v3h-8zM345 353h10v3h-10z", fill: BLUE });
strokes(340, 352, 5, 4, GREEN, 0.4);
strokes(331, 377, 24, 18, LILAC, 0.06);
strokes(331, 390, 34, 4, LILAC, 0.35);
line("M331 376.500h28v18h6v5", LILAC, "3 2");

// North arrow and its caption
line("M417 246a7 7 0 1 1-4-13M418 235l1 8", LILAC, "3 1");
strokes(407, 236, 6, 10, LILAC, 0.4);
strokes(410, 225, 3, 5, LILAC, 0.7);
line("M402 257.500h4l2 2h6l2-2h6", LILAC, "3 1");
strokes(403, 254, 4, 3, LILAC, 0.5);
strokes(412, 258, 4, 3, LILAC, 0.7);
strokes(419, 254, 4, 4, LILAC, 0.5);

// Elevations
line("M160.500 362v-40h18l-2-3h28l4-3 6 10h13l-3 4v32", GREEN, "4 2");
strokes(177, 323, 34, 16, GREEN, 0.2);
strokes(161, 341, 63, 21, GREEN, 0.26);
strokes(206, 326, 18, 15, GREEN, 0.2);
line("M164 342.500h60M164 350.500h60M188.500 330v30", GREEN, "5 2");
line("M164.500 415v-23h12v-19h41v10h4v32", GREEN, "4 2");
strokes(177, 380, 40, 12, GREEN, 0.2);
strokes(164, 391, 57, 24, GREEN, 0.26);
line("M166 392.500h54M166 404.500h54", GREEN, "5 2");
line("M135 362.500h122M141 418.500h12M153 417.500h35M189 415.500h70", LILAC, "4 2");
tree(148, 349); tree(236, 348); tree(154, 403); tree(235, 401);
strokes(151, 351, 9, 10, BLUE, 0.7);
strokes(157, 403, 8, 10, BLUE, 0.7);

// Notes block
strokes(282, 405, 7, 17, LILAC, 0.45);
strokes(297, 405, 8, 17, LILAC, 0.45);
strokes(305, 408, 5, 3, LILAC, 0.5);
strokes(317, 405, 9, 17, LILAC, 0.45);
strokes(326, 418, 6, 3, LILAC, 0.5);
let beads = "";
for (let x = 256; x < 331; x += 6) beads += `M${x}.5 424.5h3v2h-3zM${x + 1}.5 426.5h3v2h-3zM${x + 4} 424.5h2`;
line(beads, LILAC);

// Coordinate axes
line("M111.500 431.500h6v6h-6z", "#fff");
line("M114.500 434V408M111.500 408.500l3-8 3 8z", GREEN);
line("M115 434.500h25M140.500 431.500l7 3-7 3z", ORANGE);
add("path", { d: "M143 433h4v3h-4z", fill: ROSE });
add("text", { x: 114.5, y: 394, class: "axis" }).textContent = "Y";
add("text", { x: 157.5, y: 438, class: "axis" }).textContent = "X";
```
